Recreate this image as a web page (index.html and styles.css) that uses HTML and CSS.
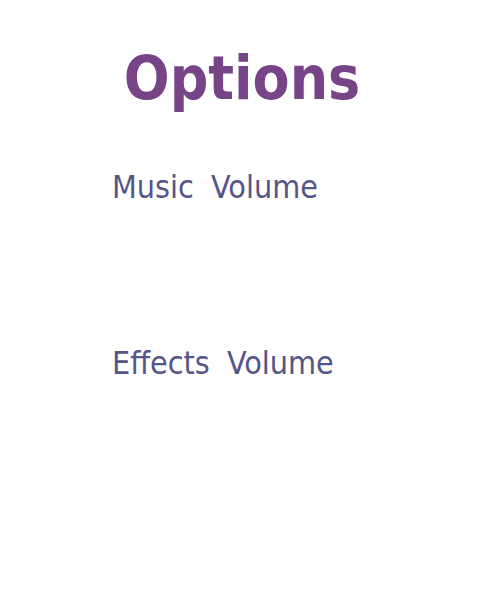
FILE: index.html
```html
<!DOCTYPE html>
<html>
<head>
<meta charset="utf-8">
<link rel="stylesheet" href="styles.css">
</head>
<body>
<div class="options">
  <h1 class="title">Options</h1>
  <div class="setting">
    <div class="label">Music Volume</div>
    <div class="slider-space"></div>
  </div>
  <div class="setting">
    <div class="label">Effects Volume</div>
    <div class="slider-space"></div>
  </div>
</div>
</body>
</html>
```
FILE: styles.css
```css
html, body {
  margin: 0;
  padding: 0;
  background: #ffffff;
}
body {
  width: 500px;
  height: 600px;
  font-family: "DejaVu Sans Condensed", "DejaVu Sans", sans-serif;
}
.options {
  display: flex;
  flex-direction: column;
}
.title {
  margin: 0;
  padding-top: 38px;
  padding-right: 16px;
  text-align: center;
  font-size: 60px;
  font-weight: bold;
  line-height: 80px;
  color: #774488;
}
.setting {
  padding-left: 112px;
  margin-top: 49px;
}
.label {
  font-size: 32px;
  line-height: 40px;
  word-spacing: 8px;
  color: #555588;
}
.slider-space {
  height: 87px;
}
```
